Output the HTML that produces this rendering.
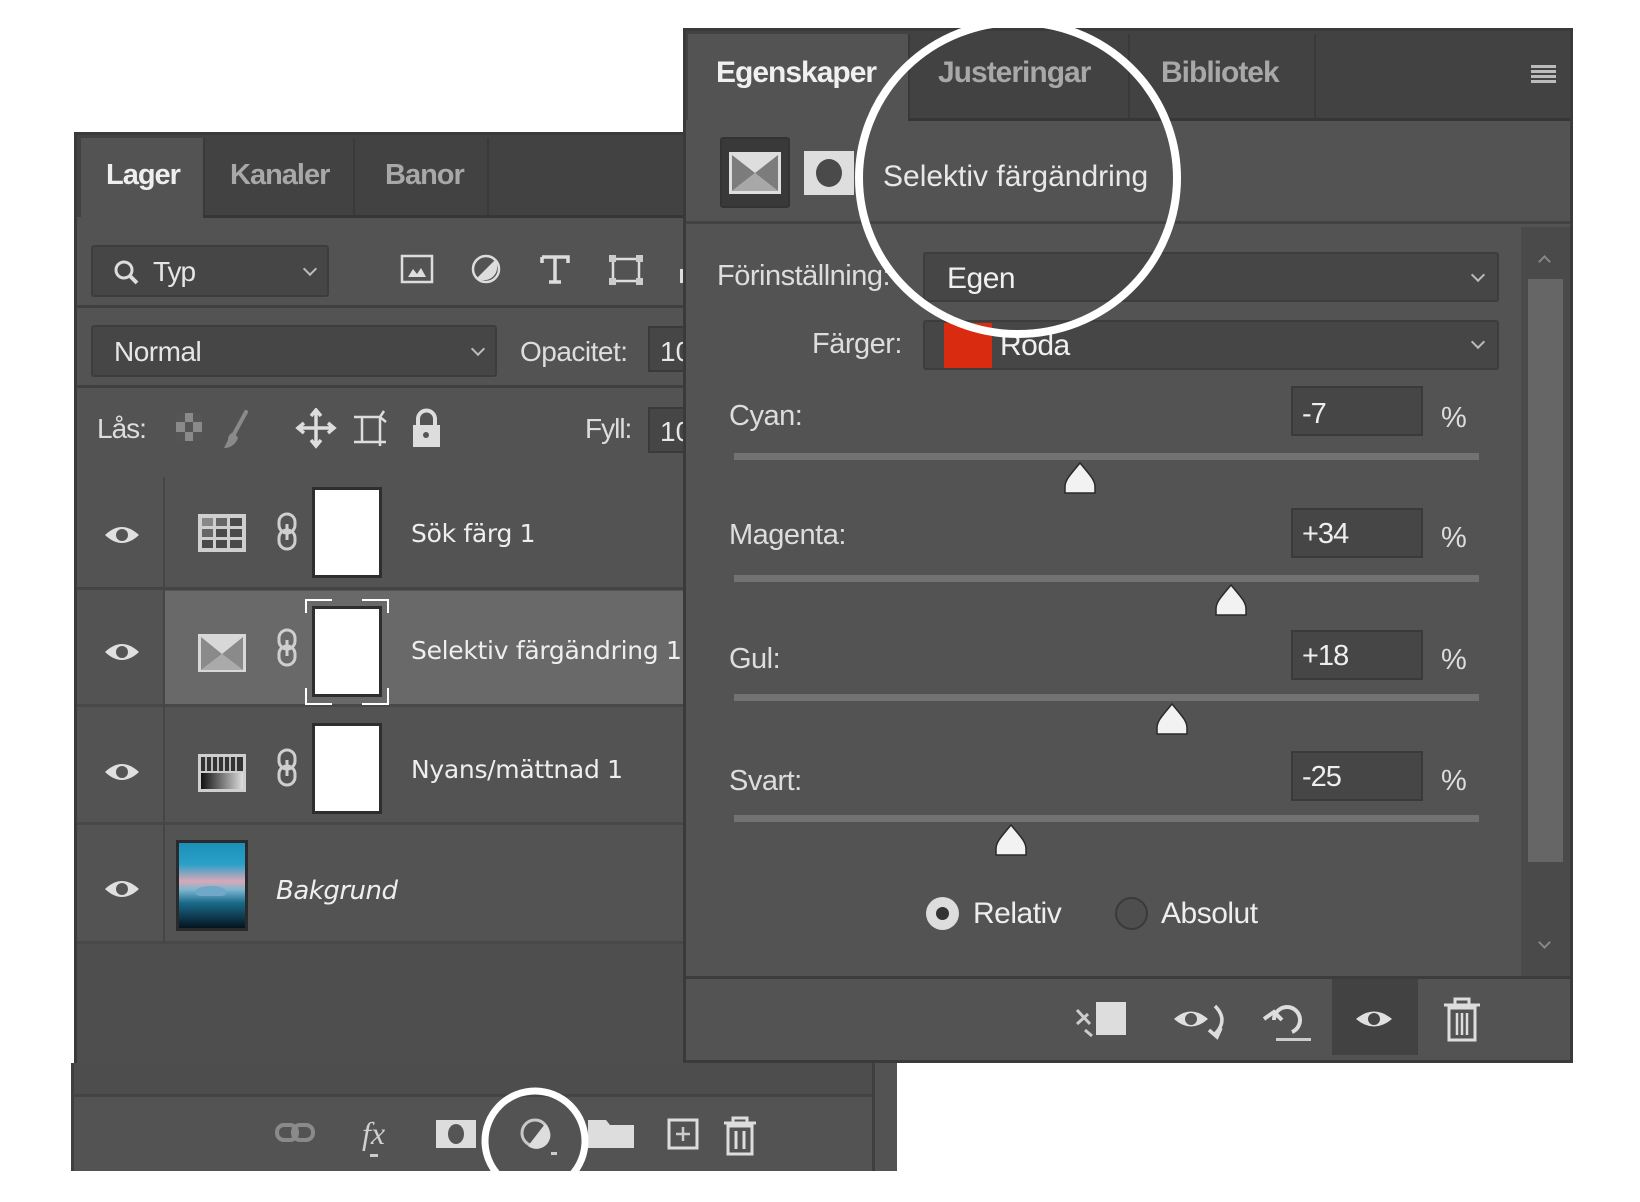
<!DOCTYPE html>
<html><head><meta charset="utf-8"><style>
*{margin:0;padding:0;box-sizing:border-box}
body{width:1640px;height:1202px;background:#fff;position:relative;overflow:hidden;font-family:"Liberation Sans",sans-serif;color:#e6e6e6}
.a{position:absolute}
.t{position:absolute;white-space:nowrap;line-height:1}
.dd{position:absolute;background:#464646;border:2px solid #3d3d3d;border-radius:3px}
.chev{position:absolute;width:10px;height:10px;border-right:2px solid #bbb;border-bottom:2px solid #bbb;transform:rotate(45deg)}
.inp{position:absolute;background:#464646;border:2px solid #3a3a3a}
.track{position:absolute;left:734px;width:745px;height:7px;background:#727272}
</style></head><body>

<!-- LEFT PANEL -->
<div class="a" style="left:74px;top:132px;width:612px;height:935px;background:#535353;border-left:3px solid #3a3a3a;border-top:3px solid #3a3a3a"></div>
<div class="a" style="left:77px;top:135px;width:609px;height:82px;background:#424242"></div>
<div class="a" style="left:81px;top:138px;width:122px;height:82px;background:#535353"></div>
<div class="a" style="left:203px;top:138px;width:2px;height:79px;background:#3a3a3a"></div>
<div class="a" style="left:353px;top:138px;width:2px;height:79px;background:#3a3a3a"></div>
<div class="a" style="left:487px;top:138px;width:2px;height:79px;background:#3a3a3a"></div>
<div class="a" style="left:203px;top:215px;width:483px;height:3px;background:#363636"></div>
<div class="t" style="left:106px;top:161px;font-size:29px;font-weight:bold;color:#eee;letter-spacing:-1px">Lager</div>
<div class="t" style="left:230px;top:161px;font-size:29px;font-weight:bold;color:#a8a8a8;letter-spacing:-1px">Kanaler</div>
<div class="t" style="left:385px;top:161px;font-size:29px;font-weight:bold;color:#a8a8a8;letter-spacing:-1px">Banor</div>

<div class="dd" style="left:91px;top:245px;width:238px;height:52px"></div>
<svg class="a" style="left:112px;top:258px" width="30" height="30"><circle cx="12" cy="12" r="8" fill="none" stroke="#ddd" stroke-width="3"/><line x1="18" y1="18" x2="25" y2="25" stroke="#ddd" stroke-width="4"/></svg>
<div class="t" style="left:153px;top:258px;font-size:28px;letter-spacing:-1px">Typ</div>
<div class="chev" style="left:305px;top:264px"></div>
<svg class="a" style="left:400px;top:253px" width="300" height="40">
<rect x="2" y="3" width="30" height="26" fill="none" stroke="#ddd" stroke-width="2.5"/><path d="M8 24 L13 16 L17 21 L21 15 L26 24Z" fill="#ddd"/>
<circle cx="86" cy="16" r="13" fill="none" stroke="#ddd" stroke-width="2.5"/><path d="M95 7 A13 13 0 0 1 77 25Z" fill="#ddd"/>
<path d="M142 4 H168 V10 M142 4 V10 M155 4 V29 M149 29 H161" fill="none" stroke="#ddd" stroke-width="3.5"/>
<rect x="213" y="6" width="26" height="22" fill="none" stroke="#ddd" stroke-width="2.5"/><rect x="209" y="2" width="7" height="7" fill="#ccc"/><rect x="236" y="2" width="7" height="7" fill="#ccc"/><rect x="209" y="25" width="7" height="7" fill="#ccc"/><rect x="236" y="25" width="7" height="7" fill="#ccc"/>
<rect x="280" y="16" width="4" height="14" fill="#ddd"/>
</svg>
<div class="a" style="left:77px;top:305px;width:609px;height:3px;background:#404040"></div>

<div class="dd" style="left:91px;top:325px;width:406px;height:52px"></div>
<div class="t" style="left:114px;top:338px;font-size:28px;letter-spacing:-0.5px">Normal</div>
<div class="chev" style="left:473px;top:344px"></div>
<div class="t" style="left:520px;top:338px;font-size:28px;color:#ddd;letter-spacing:-0.5px">Opacitet:</div>
<div class="inp" style="left:648px;top:326px;width:60px;height:46px"></div>
<div class="t" style="left:660px;top:338px;font-size:28px">10</div>
<div class="a" style="left:77px;top:385px;width:609px;height:3px;background:#404040"></div>

<div class="t" style="left:97px;top:415px;font-size:28px;color:#ddd;letter-spacing:-1px">Lås:</div>
<svg class="a" style="left:170px;top:408px" width="310" height="44">
<rect x="6" y="5" width="26" height="28" fill="#8a8a8a"/><rect x="6" y="5" width="9" height="9" fill="#555"/><rect x="23" y="5" width="9" height="9" fill="#555"/><rect x="15" y="14" width="8" height="10" fill="#555"/><rect x="6" y="24" width="9" height="9" fill="#555"/><rect x="23" y="24" width="9" height="9" fill="#555"/>
<path d="M76 4 L64 26" stroke="#8a8a8a" stroke-width="4" stroke-linecap="round"/><path d="M64 24 Q58 26 58 32 L54 40 Q64 40 68 30Z" fill="#8a8a8a"/>
<path d="M146 3 V37 M129 20 H163 M141 8 L146 2 L151 8 M141 32 L146 38 L151 32 M134 15 L128 20 L134 25 M158 15 L164 20 L158 25" fill="none" stroke="#ddd" stroke-width="3.5"/>
<path d="M184 9 H210 M192 9 V34 M184 34 H216 M210 9 V38 M214 3 L210 9 L216 14" fill="none" stroke="#ddd" stroke-width="2.5"/><path d="M192 9 H210 L192 27Z" fill="none"/>
<rect x="243" y="17" width="27" height="22" fill="#ddd"/><path d="M248 18 V11 A8 8 0 0 1 265 11 V18" fill="none" stroke="#ddd" stroke-width="4"/><circle cx="256" cy="27" r="3" fill="#555"/>
</svg>
<div class="t" style="left:585px;top:415px;font-size:28px;color:#ddd;letter-spacing:-1px">Fyll:</div>
<div class="inp" style="left:648px;top:407px;width:60px;height:46px"></div>
<div class="t" style="left:660px;top:418px;font-size:28px">10</div>

<!-- layer rows -->
<div class="a" style="left:77px;top:587px;width:609px;height:3px;background:#444"></div>
<div class="a" style="left:165px;top:591px;width:521px;height:115px;background:#696969"></div>
<div class="a" style="left:77px;top:704px;width:609px;height:3px;background:#484848"></div>
<div class="a" style="left:77px;top:822px;width:609px;height:3px;background:#484848"></div>
<div class="a" style="left:77px;top:941px;width:609px;height:3px;background:#484848"></div>
<div class="a" style="left:163px;top:477px;width:2px;height:466px;background:#454545"></div>

<svg class="a" style="left:104px;top:522px" width="40" height="380">
<g fill="#e0e0e0"><path d="M1 13 Q18 -3 35 13 Q18 29 1 13Z"/><path d="M1 130 Q18 114 35 130 Q18 146 1 130Z"/><path d="M1 250 Q18 234 35 250 Q18 266 1 250Z"/><path d="M1 367 Q18 351 35 367 Q18 383 1 367Z"/></g>
<g fill="#555"><circle cx="18" cy="13" r="6"/><circle cx="18" cy="130" r="6"/><circle cx="18" cy="250" r="6"/><circle cx="18" cy="367" r="6"/></g>
</svg>

<svg class="a" style="left:196px;top:512px" width="52" height="42"><rect x="2" y="2" width="48" height="38" fill="#cfcfcf"/><g fill="#4a4a4a"><rect x="6" y="6" width="11" height="8" fill="#888"/><rect x="20" y="6" width="11" height="8" fill="#666"/><rect x="34" y="6" width="12" height="8"/><rect x="6" y="17" width="11" height="8" fill="#666"/><rect x="20" y="17" width="11" height="8"/><rect x="34" y="17" width="12" height="8"/><rect x="6" y="28" width="11" height="8"/><rect x="20" y="28" width="11" height="8"/><rect x="34" y="28" width="12" height="8"/></g></svg>
<svg class="a" style="left:196px;top:632px" width="52" height="42"><rect x="2" y="2" width="48" height="38" fill="#d8d8d8"/><path d="M5 5 L26 22 L5 38Z M47 5 L26 22 L47 38Z" fill="#8a8a8a"/><path d="M5 38 L26 22 L47 38Z" fill="#aaa"/></svg>
<svg class="a" style="left:196px;top:752px" width="52" height="42"><defs><linearGradient id="g1"><stop offset="0" stop-color="#111"/><stop offset="1" stop-color="#ddd"/></linearGradient></defs><rect x="2" y="2" width="48" height="38" fill="#cfcfcf"/><rect x="5" y="5" width="42" height="14" fill="#333"/><g fill="#bbb"><rect x="9" y="5" width="2" height="14"/><rect x="15" y="5" width="2" height="14"/><rect x="21" y="5" width="2" height="14"/><rect x="27" y="5" width="2" height="14"/><rect x="33" y="5" width="2" height="14"/><rect x="39" y="5" width="2" height="14"/></g><rect x="5" y="21" width="42" height="16" fill="url(#g1)"/></svg>

<svg class="a" style="left:276px;top:512px" width="26" height="300">
<g fill="none" stroke="#cfcfcf" stroke-width="3"><rect x="3" y="2" width="16" height="19" rx="8"/><rect x="3" y="18" width="16" height="19" rx="8"/><line x1="11" y1="12" x2="11" y2="28"/>
<rect x="3" y="118" width="16" height="19" rx="8"/><rect x="3" y="134" width="16" height="19" rx="8"/><line x1="11" y1="128" x2="11" y2="144"/>
<rect x="3" y="238" width="16" height="19" rx="8"/><rect x="3" y="254" width="16" height="19" rx="8"/><line x1="11" y1="248" x2="11" y2="264"/></g></svg>

<div class="a" style="left:312px;top:487px;width:70px;height:91px;background:#fff;border:3px solid #2e2e2e"></div>
<div class="a" style="left:312px;top:606px;width:70px;height:91px;background:#fff;border:3px solid #2e2e2e"></div>
<svg class="a" style="left:304px;top:598px" width="86" height="108"><path d="M2 15 V2 H28 M58 2 H84 V15 M2 90 V106 H28 M58 106 H84 V90" fill="none" stroke="#fff" stroke-width="2"/></svg>
<div class="a" style="left:312px;top:723px;width:70px;height:91px;background:#fff;border:3px solid #2e2e2e"></div>

<div class="t" style="left:411px;top:521px;font-family:'DejaVu Sans',sans-serif;font-size:25px;color:#eee;letter-spacing:-0.3px">Sök färg 1</div>
<div class="t" style="left:411px;top:638px;font-family:'DejaVu Sans',sans-serif;font-size:25px;color:#eee;letter-spacing:-0.3px">Selektiv färgändring 1</div>
<div class="t" style="left:411px;top:757px;font-family:'DejaVu Sans',sans-serif;font-size:25px;color:#eee;letter-spacing:-0.3px">Nyans/mättnad 1</div>

<div class="a" style="left:176px;top:840px;width:72px;height:91px;border:3px solid #2a2a2a;background:linear-gradient(#1b8fb8 0%,#2aa0c8 25%,#d9a8b8 45%,#7bb6cf 55%,#1b6c8c 70%,#05131e 100%)"></div>
<div class="a" style="left:196px;top:886px;width:30px;height:10px;background:#6fa8c8;border-radius:50% 50% 20% 20%"></div>
<div class="t" style="left:276px;top:878px;font-family:'DejaVu Sans',sans-serif;font-style:italic;font-size:26px;color:#eee;letter-spacing:-0.5px">Bakgrund</div>

<div class="a" style="left:77px;top:944px;width:609px;height:123px;background:#4e4e4e"></div>

<!-- left footer -->
<div class="a" style="left:71px;top:1063px;width:826px;height:108px;background:#535353"></div>
<div class="a" style="left:71px;top:1063px;width:802px;height:32px;background:#4d4d4d"></div>
<div class="a" style="left:71px;top:1094px;width:802px;height:3px;background:#444"></div>
<div class="a" style="left:872px;top:1063px;width:3px;height:108px;background:#3f3f3f"></div>
<div class="a" style="left:71px;top:1063px;width:3px;height:108px;background:#3f3f3f"></div>
<svg class="a" style="left:270px;top:1106px" width="520" height="56">
<g fill="none" stroke="#8a8a8a" stroke-width="4"><rect x="7" y="19" width="20" height="15" rx="7"/><rect x="23" y="19" width="20" height="15" rx="7"/></g>
<text x="92" y="38" font-family="Liberation Serif,serif" font-style="italic" font-size="32" fill="#cfcfcf">fx</text><rect x="100" y="48" width="8" height="3" fill="#ccc"/>
<rect x="166" y="14" width="40" height="28" fill="#ddd"/><ellipse cx="186" cy="28" rx="8" ry="10" fill="#555"/>
<circle cx="265" cy="27" r="13" fill="none" stroke="#c8c8c8" stroke-width="3"/><path d="M275 18 A13 13 0 0 1 258 40Z" fill="#ddd"/><rect x="281" y="46" width="6" height="3" fill="#ccc"/>
<path d="M318 14 H336 L340 19 H364 V42 H318Z" fill="#ddd"/>
<rect x="399" y="14" width="28" height="28" fill="none" stroke="#ddd" stroke-width="3"/><path d="M413 21 V35 M406 28 H420" stroke="#ccc" stroke-width="2.5"/>
<path d="M454 17 H486 M463 17 V12 H477 V17" fill="none" stroke="#ddd" stroke-width="3"/><rect x="458" y="20" width="24" height="28" fill="none" stroke="#ddd" stroke-width="3"/><path d="M466 25 V43 M474 25 V43" stroke="#ddd" stroke-width="3"/>
</svg>

<!-- RIGHT PANEL -->
<div class="a" style="left:683px;top:28px;width:890px;height:1035px;background:#535353;border:3px solid #3a3a3a"></div>
<div class="a" style="left:686px;top:31px;width:884px;height:89px;background:#424242"></div>
<div class="a" style="left:688px;top:34px;width:220px;height:86px;background:#535353"></div>
<div class="a" style="left:908px;top:34px;width:2px;height:86px;background:#393939"></div>
<div class="a" style="left:1128px;top:34px;width:2px;height:86px;background:#393939"></div>
<div class="a" style="left:1314px;top:34px;width:2px;height:86px;background:#393939"></div>
<div class="a" style="left:908px;top:118px;width:662px;height:3px;background:#363636"></div>
<div class="t" style="left:716px;top:58px;font-size:30px;font-weight:bold;color:#f0f0f0;letter-spacing:-1px">Egenskaper</div>
<div class="t" style="left:938px;top:58px;font-size:30px;font-weight:bold;color:#a8a8a8;letter-spacing:-1px">Justeringar</div>
<div class="t" style="left:1161px;top:58px;font-size:30px;font-weight:bold;color:#a8a8a8;letter-spacing:-1px">Bibliotek</div>
<svg class="a" style="left:1531px;top:65px" width="26" height="20"><g fill="#bbb"><rect y="0" width="25" height="3"/><rect y="5" width="25" height="3"/><rect y="10" width="25" height="3"/><rect y="15" width="25" height="3"/></g></svg>

<div class="a" style="left:720px;top:137px;width:70px;height:71px;background:#393939;border-radius:3px;border:2px solid #333"></div>
<svg class="a" style="left:729px;top:152px" width="52" height="42"><rect x="0" y="0" width="52" height="42" fill="#dedede"/><path d="M3 3 L26 21 L3 39Z M49 3 L26 21 L49 39Z" fill="#7c7c7c"/><path d="M3 39 L26 21 L49 39Z" fill="#a8a8a8"/></svg>
<div class="a" style="left:804px;top:151px;width:50px;height:44px;background:#dedede"></div>
<div class="a" style="left:816px;top:159px;width:26px;height:28px;background:#4a4a4a;border-radius:50%"></div>
<div class="t" style="left:883px;top:162px;font-size:30px;color:#e8e8e8;letter-spacing:0px">Selektiv färgändring</div>
<div class="a" style="left:686px;top:221px;width:884px;height:3px;background:#424242"></div>

<div class="a" style="left:1521px;top:227px;width:49px;height:750px;background:#4a4a4a"></div>
<div class="a" style="left:1540px;top:257px;width:9px;height:9px;border-left:2px solid #888;border-top:2px solid #888;transform:rotate(45deg)"></div>
<div class="a" style="left:1528px;top:279px;width:35px;height:583px;background:#666"></div>
<div class="a" style="left:1540px;top:938px;width:9px;height:9px;border-right:2px solid #888;border-bottom:2px solid #888;transform:rotate(45deg)"></div>

<div class="t" style="left:717px;top:262px;font-size:29px;color:#ddd;letter-spacing:-0.5px">Förinställning:</div>
<div class="dd" style="left:923px;top:252px;width:576px;height:50px"></div>
<div class="t" style="left:947px;top:264px;font-size:30px;color:#f0f0f0;letter-spacing:-0.5px">Egen</div>
<div class="chev" style="left:1473px;top:270px"></div>
<div class="t" style="left:812px;top:330px;font-size:29px;color:#ddd;letter-spacing:-0.5px">Färger:</div>
<div class="dd" style="left:923px;top:320px;width:576px;height:50px"></div>
<div class="a" style="left:944px;top:323px;width:48px;height:45px;background:#d92b10"></div>
<div class="t" style="left:1000px;top:331px;font-size:30px;color:#f0f0f0;letter-spacing:-0.5px">Röda</div>
<div class="chev" style="left:1473px;top:337px"></div>

<div class="t" style="left:729px;top:402px;font-size:29px;color:#ddd;letter-spacing:-0.5px">Cyan:</div>
<div class="inp" style="left:1291px;top:386px;width:132px;height:50px"></div>
<div class="t" style="left:1302px;top:400px;font-size:29px;color:#eee;letter-spacing:-1px">-7</div>
<div class="t" style="left:1441px;top:404px;font-size:29px;color:#ddd">%</div>
<div class="track" style="top:453px"></div>

<div class="t" style="left:729px;top:521px;font-size:29px;color:#ddd;letter-spacing:-0.5px">Magenta:</div>
<div class="inp" style="left:1291px;top:508px;width:132px;height:50px"></div>
<div class="t" style="left:1302px;top:520px;font-size:29px;color:#eee;letter-spacing:-1px">+34</div>
<div class="t" style="left:1441px;top:524px;font-size:29px;color:#ddd">%</div>
<div class="track" style="top:575px"></div>

<div class="t" style="left:729px;top:645px;font-size:29px;color:#ddd;letter-spacing:-0.5px">Gul:</div>
<div class="inp" style="left:1291px;top:630px;width:132px;height:50px"></div>
<div class="t" style="left:1302px;top:642px;font-size:29px;color:#eee;letter-spacing:-1px">+18</div>
<div class="t" style="left:1441px;top:646px;font-size:29px;color:#ddd">%</div>
<div class="track" style="top:694px"></div>

<div class="t" style="left:729px;top:767px;font-size:29px;color:#ddd;letter-spacing:-0.5px">Svart:</div>
<div class="inp" style="left:1291px;top:751px;width:132px;height:50px"></div>
<div class="t" style="left:1302px;top:763px;font-size:29px;color:#eee;letter-spacing:-1px">-25</div>
<div class="t" style="left:1441px;top:767px;font-size:29px;color:#ddd">%</div>
<div class="track" style="top:815px"></div>

<svg class="a" style="left:0;top:0" width="1640" height="1202">
<g fill="#f2f2f2" stroke="#2a2a2a" stroke-width="1.5">
<path d="M1080 463 C1070 475 1065 480 1065 487 V493 H1095 V487 C1095 480 1090 475 1080 463Z"/>
<path d="M1231 585 C1221 597 1216 602 1216 609 V615 H1246 V609 C1246 602 1241 597 1231 585Z"/>
<path d="M1172 704 C1162 716 1157 721 1157 728 V734 H1187 V728 C1187 721 1182 716 1172 704Z"/>
<path d="M1011 825 C1001 837 996 842 996 849 V855 H1026 V849 C1026 842 1021 837 1011 825Z"/>
</g>
</svg>

<div class="a" style="left:926px;top:897px;width:33px;height:33px;border-radius:50%;background:#ddd"></div>
<div class="a" style="left:936px;top:907px;width:13px;height:13px;border-radius:50%;background:#333"></div>
<div class="t" style="left:973px;top:899px;font-size:30px;color:#eee;letter-spacing:-0.5px">Relativ</div>
<div class="a" style="left:1115px;top:897px;width:33px;height:33px;border-radius:50%;border:2px solid #3a3a3a;background:#4e4e4e"></div>
<div class="t" style="left:1161px;top:899px;font-size:30px;color:#eee;letter-spacing:-0.5px">Absolut</div>

<div class="a" style="left:686px;top:976px;width:884px;height:3px;background:#3c3c3c"></div>
<div class="a" style="left:1332px;top:979px;width:86px;height:76px;background:#424242"></div>
<svg class="a" style="left:1060px;top:990px" width="500" height="60">
<rect x="36" y="12" width="30" height="33" fill="#ddd"/><path d="M17 20 L30 34 M17 34 L28 24 M25 40 L32 46" stroke="#ccc" stroke-width="3"/>
<path d="M114 29 Q131 14 148 29 Q131 44 114 29Z" fill="#e0e0e0"/><circle cx="131" cy="29" r="6" fill="#555"/><path d="M155 16 Q169 30 155 44 M149 40 L157 47 L161 38" fill="none" stroke="#ddd" stroke-width="3.5"/>
<path d="M214 30 A13 13 0 1 1 232 42 M204 29 L214 22 L222 30" fill="none" stroke="#ddd" stroke-width="4"/><rect x="216" y="48" width="35" height="3" fill="#ccc"/>
<path d="M296 29 Q314 14 332 29 Q314 44 296 29Z" fill="#e0e0e0"/><circle cx="314" cy="29" r="6" fill="#444"/>
<path d="M384 15 H420 M395 15 V9 H409 V15" fill="none" stroke="#ddd" stroke-width="3"/><rect x="389" y="18" width="26" height="32" fill="none" stroke="#ddd" stroke-width="3"/><path d="M397 23 V45 M402 23 V45 M407 23 V45" stroke="#ddd" stroke-width="2.5"/>
</svg>

<svg class="a" style="left:0;top:0" width="1640" height="1202">
<ellipse cx="1018" cy="178" rx="159" ry="156" fill="none" stroke="#fff" stroke-width="8"/>
<circle cx="535" cy="1141" r="50" fill="none" stroke="#fff" stroke-width="7"/>
</svg>
<div class="a" style="left:0;top:1171px;width:1640px;height:31px;background:#fff"></div>
</body></html>
